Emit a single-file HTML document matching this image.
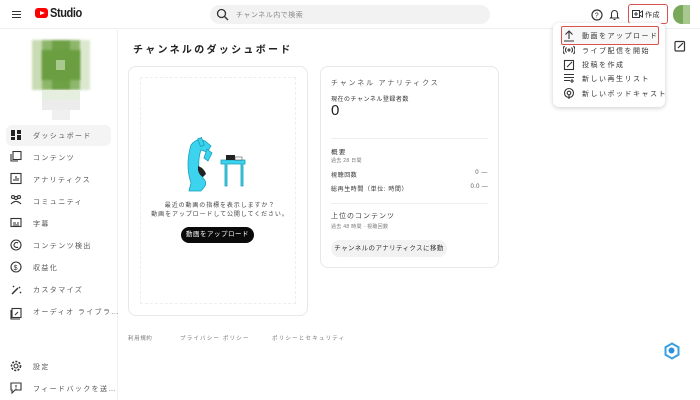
<!DOCTYPE html>
<html><head><meta charset="utf-8"><style>
*{margin:0;padding:0;box-sizing:border-box}
body{width:700px;height:400px;overflow:hidden;background:#fff;font-family:"Liberation Sans","Noto Sans CJK JP",sans-serif;color:#222;position:relative}
.a{position:absolute}
.t{font-size:7px;letter-spacing:1.4px;color:#555;white-space:nowrap}
svg{display:block}
</style></head><body>
<!-- header -->
<div class="a" style="left:0;top:0;width:700px;height:29px;border-bottom:1px solid #eee"></div>
<div class="a" style="left:12px;top:11px;width:9px;height:1.3px;background:#333;box-shadow:0 3px 0 #333,0 6px 0 #333"></div>
<div class="a" style="left:35px;top:8px;width:13px;height:10px;background:#f00;border-radius:3px"></div>
<div class="a" style="left:40px;top:10.5px;width:0;height:0;border-left:5px solid #fff;border-top:2.5px solid transparent;border-bottom:2.5px solid transparent"></div>
<div class="a" style="left:50px;top:5px;font-size:13px;font-weight:bold;letter-spacing:-0.5px;color:#222;transform:scaleX(0.85);transform-origin:left">Studio</div>
<div class="a" style="left:210px;top:5px;width:280px;height:19px;background:#f2f2f2;border-radius:10px"></div>
<svg class="a" style="left:216px;top:8px" width="13" height="13" viewBox="0 0 13 13"><circle cx="5.5" cy="5.5" r="4" fill="none" stroke="#333" stroke-width="1.3"/><path d="M8.5 8.5l3.5 3.5" stroke="#333" stroke-width="1.3"/></svg>
<div class="a t" style="left:236px;top:10px;font-size:7px;color:#888;letter-spacing:0.5px">チャンネル内で検索</div>
<svg class="a" style="left:591px;top:9px" width="12" height="12"><circle cx="6" cy="6" r="5" fill="none" stroke="#333" stroke-width="1.2"/><text x="3.8" y="8.5" font-size="7" fill="#333" font-family="Liberation Sans">?</text></svg>
<svg class="a" style="left:609px;top:8px" width="11" height="13"><path d="M2.5 9V5.5a3 3 0 0 1 6 0V9l1 1H1.5z" fill="none" stroke="#333" stroke-width="1.1"/><path d="M4.5 11.5h2" stroke="#333"/></svg>
<div class="a" style="left:628px;top:4px;width:40px;height:20px;border:1.5px solid #d9534f;border-radius:3px"></div>
<svg class="a" style="left:632px;top:10px" width="11" height="9"><rect x="0.5" y="0.5" width="7" height="7" fill="none" stroke="#333"/><path d="M7.5 3l3-2v6l-3-2M4 2v4M2 4h4" fill="none" stroke="#333"/></svg>
<div class="a t" style="left:645px;top:10px;font-size:7px;color:#333;letter-spacing:0.5px">作成</div>
<div class="a" style="left:673px;top:5px;width:17px;height:19px;background:#7aa85a;border-radius:9px 0 0 9px"></div>
<div class="a" style="left:683px;top:5px;width:7px;height:19px;background:#a8c890"></div>
<!-- sidebar -->
<div class="a" style="left:117px;top:30px;width:1px;height:370px;background:#f0f0f0"></div>
<div class="a" style="left:32px;top:40px;width:58px;height:50px;background:
linear-gradient(90deg,#c9dcb5 0 10px,#8eb76b 10px 20px,#6ea045 20px 38px,#8eb76b 38px 48px,#dbe8cf 48px);filter:blur(1px)"></div>
<div class="a" style="left:42px;top:50px;width:38px;height:30px;background:#6a9e40;filter:blur(1px)"></div>
<div class="a" style="left:56px;top:60px;width:9px;height:10px;background:#a9c98f"></div>
<div class="a" style="left:42px;top:90px;width:38px;height:10px;background:#e6eee0"></div>
<div class="a" style="left:42px;top:100px;width:38px;height:10px;background:#ececec"></div>
<div class="a" style="left:52px;top:110px;width:18px;height:10px;background:#f0f0f0"></div>
<div class="a" style="left:6px;top:125px;width:105px;height:21px;background:#f4f4f4;border-radius:6px"></div>
<div class="a" style="left:11px;top:130px;width:10px;height:10px;background:
linear-gradient(#222,#222) 0 0/4px 6px no-repeat,linear-gradient(#222,#222) 6px 0/4px 4px no-repeat,linear-gradient(#222,#222) 0 7px/4px 3px no-repeat,linear-gradient(#222,#222) 6px 5px/4px 5px no-repeat"></div>
<div class="a t" style="left:33px;top:131px">ダッシュボード</div>
<div class="a t" style="left:33px;top:153px">コンテンツ</div>
<div class="a t" style="left:33px;top:175px">アナリティクス</div>
<div class="a t" style="left:33px;top:197px">コミュニティ</div>
<div class="a t" style="left:33px;top:219px">字幕</div>
<div class="a t" style="left:33px;top:241px">コンテンツ検出</div>
<div class="a t" style="left:33px;top:263px">収益化</div>
<div class="a t" style="left:33px;top:285px">カスタマイズ</div>
<div class="a t" style="left:33px;top:307px">オーディオ ライブラ…</div>
<div class="a t" style="left:33px;top:362px">設定</div>
<div class="a t" style="left:33px;top:384px">フィードバックを送…</div>
<svg class="a" style="left:10px;top:151px" width="12" height="176" fill="none" stroke="#333" stroke-width="1.1">
<rect x="3" y="0.5" width="8" height="8"/><path d="M1 3v7h7"/>
<rect x="1" y="22.5" width="10" height="10"/><path d="M4 30v-2M6 30v-5M8 30v-3"/>
<circle cx="3" cy="46" r="1.5"/><circle cx="9" cy="46" r="1.5"/><circle cx="6" cy="47" r="1.5"/><path d="M1 53q5-5 10 0"/>
<rect x="1" y="67.5" width="10" height="8"/><path d="M3 72h3M7 72h2M3 74h6"/>
<circle cx="6" cy="94" r="5"/><path d="M8 92a2.5 2.5 0 1 0 0 4"/>
<circle cx="6" cy="116" r="5"/><text x="3.6" y="119" font-size="7" fill="#333" stroke="none">$</text>
<path d="M2 143l6-6M9 136l1 1M3 135l1 1M10 141l1 1" stroke-width="1.5"/>
<rect x="2" y="157.5" width="9" height="9"/><path d="M1 159v9h9M5 164l3-3"/>
</svg>
<svg class="a" style="left:10px;top:360px" width="12" height="12" fill="none" stroke="#333" stroke-width="1.1"><circle cx="6" cy="6" r="2"/><circle cx="6" cy="6" r="4.5" stroke-dasharray="2 1.4" stroke-width="1.6"/></svg>
<svg class="a" style="left:10px;top:382px" width="12" height="12" fill="none" stroke="#333" stroke-width="1.1"><path d="M1 1h10v7H5l-3 3V8H1z"/><path d="M6 3v2.5M6 6.5v1"/></svg>
<!-- main -->
<div class="a" style="left:133px;top:41px;font-size:10px;letter-spacing:2.3px;color:#222;font-weight:bold">チャンネルのダッシュボード</div>
<div class="a" style="left:128px;top:66px;width:180px;height:250px;border:1px solid #e8e8e8;border-radius:8px"></div>
<div class="a" style="left:140px;top:77px;width:156px;height:227px;border:1px dashed #eee"></div>
<svg class="a" style="left:185px;top:135px" width="66" height="60">
<g fill="#3cd3ee" stroke="#1a9fb8" stroke-width="0.8">
<path d="M6 10q6-8 14-4l6 5-4 6-6-2q-3 8-2 20l4 8q4 4 2 8l-4 5H4l2-8q-6-18 0-38z"/>
<rect x="14" y="3" width="4" height="8" transform="rotate(-20 16 7)"/>
<path d="M22 14l5 4-4 8-4-3z"/>
<path d="M36 25h24v4h-2v22h-2V29H42v22h-2V29h-4z"/>
</g>
<path d="M13 31q6 2 8 8l-3 3q-4-2-5-7z" fill="#222"/>
<rect x="41" y="20" width="9" height="5" fill="#222"/><rect x="50" y="22" width="7" height="3" fill="#fff" stroke="#333" stroke-width="0.5"/>
</svg>
<div class="a t" style="left:155px;top:200px;font-size:6px;letter-spacing:0.9px;color:#444;text-align:center;width:130px">最近の動画の指標を表示しますか？</div>
<div class="a t" style="left:150px;top:209px;font-size:6px;letter-spacing:0.9px;color:#444;text-align:center;width:140px">動画をアップロードして公開してください。</div>
<div class="a" style="left:181px;top:227px;width:73px;height:16px;background:#0a0a0a;border-radius:8px;color:#fff;font-size:6.5px;text-align:center;line-height:16px;letter-spacing:0.5px">動画をアップロード</div>
<div class="a" style="left:320px;top:66px;width:179px;height:202px;border:1px solid #e8e8e8;border-radius:8px"></div>
<div class="a t" style="left:331px;top:78px;letter-spacing:1.8px;font-size:7px">チャンネル アナリティクス</div>
<div class="a t" style="left:331px;top:94px;font-size:6px;letter-spacing:0.5px;color:#333">現在のチャンネル登録者数</div>
<div class="a" style="left:331px;top:102px;font-size:15px;color:#222">0</div>
<div class="a" style="left:331px;top:138px;width:157px;height:1px;background:#eee"></div>
<div class="a t" style="left:331px;top:146px;font-size:6.5px;color:#333">概要</div>
<div class="a t" style="left:331px;top:157px;font-size:5px;letter-spacing:0.3px;color:#777">過去 28 日間</div>
<div class="a t" style="left:331px;top:170px;font-size:6px;letter-spacing:0.6px;color:#333">視聴回数</div>
<div class="a t" style="left:488px;top:170px;font-size:6px;letter-spacing:0.6px;color:#555;transform:translateX(-100%)">0 —</div>
<div class="a t" style="left:331px;top:184px;font-size:6px;letter-spacing:0.6px;color:#333">総再生時間（単位: 時間）</div>
<div class="a t" style="left:488px;top:184px;font-size:6px;letter-spacing:0.3px;color:#555;transform:translateX(-100%)">0.0 —</div>
<div class="a" style="left:331px;top:203px;width:157px;height:1px;background:#eee"></div>
<div class="a t" style="left:331px;top:211px;font-size:7px;letter-spacing:1px;color:#444">上位のコンテンツ</div>
<div class="a t" style="left:331px;top:223px;font-size:5px;letter-spacing:0.3px;color:#777">過去 48 時間 · 視聴回数</div>
<div class="a" style="left:331px;top:240px;width:116px;height:17px;background:#f2f2f2;border-radius:9px;font-size:6.5px;line-height:17px;text-align:center;color:#333;letter-spacing:0.4px">チャンネルのアナリティクスに移動</div>
<div class="a t" style="left:128px;top:334px;font-size:5.5px;letter-spacing:0.6px;color:#777">利用規約</div>
<div class="a t" style="left:180px;top:334px;font-size:5.5px;letter-spacing:1.2px;color:#777">プライバシー ポリシー</div>
<div class="a t" style="left:272px;top:334px;font-size:5.5px;letter-spacing:1.2px;color:#777">ポリシーとセキュリティ</div>
<!-- dropdown -->
<div class="a" style="left:553px;top:23px;width:112px;height:84px;background:#fff;border-radius:6px;box-shadow:0 1px 5px rgba(0,0,0,0.2)"></div>
<div class="a" style="left:561px;top:26px;width:98px;height:19px;border:1.5px solid #d9534f;border-radius:2px;background:#f7f7f7"></div>
<svg class="a" style="left:563px;top:29px" width="12" height="70" fill="none" stroke="#333" stroke-width="1.1">
<path d="M6 2v8M2.5 5.5L6 2l3.5 3.5M1 12h10"/>
<circle cx="6" cy="21" r="1"/><path d="M3.5 18.5a3.5 3.5 0 0 0 0 5M8.5 18.5a3.5 3.5 0 0 1 0 5M1.5 17a6 6 0 0 0 0 8M10.5 17a6 6 0 0 1 0 8"/>
<rect x="1.5" y="31.5" width="9" height="9"/><path d="M4 38l5-5"/>
<path d="M1 45.5h10M1 48.5h10M1 51.5h6M9 50v4M7 52h4"/>
<circle cx="6" cy="64" r="4.5"/><circle cx="6" cy="64" r="1.8"/><path d="M6 66v4"/>
</svg>
<div class="a t" style="left:582px;top:31px;font-size:7px;letter-spacing:1.5px;color:#333">動画をアップロード</div>
<div class="a t" style="left:582px;top:46px;font-size:7px;letter-spacing:1.5px;color:#333">ライブ配信を開始</div>
<div class="a t" style="left:582px;top:60px;font-size:7px;letter-spacing:1.5px;color:#333">投稿を作成</div>
<div class="a t" style="left:582px;top:74px;font-size:7px;letter-spacing:1.5px;color:#333">新しい再生リスト</div>
<div class="a t" style="left:582px;top:89px;font-size:7px;letter-spacing:1.5px;color:#333">新しいポッドキャスト</div>
<svg class="a" style="left:674px;top:40px" width="12" height="12" fill="none" stroke="#333" stroke-width="1.2"><rect x="1" y="1.5" width="9.5" height="9.5" rx="1"/><path d="M4 8l5-5"/></svg>
<svg class="a" style="left:663px;top:342px" width="18" height="18"><path d="M9 1.5l6.5 3.75v7.5L9 16.5l-6.5-3.75v-7.5z" fill="none" stroke="#3aa0e0" stroke-width="2"/><circle cx="8.5" cy="8.5" r="3" fill="#2f8fd8"/></svg>
</body></html>
